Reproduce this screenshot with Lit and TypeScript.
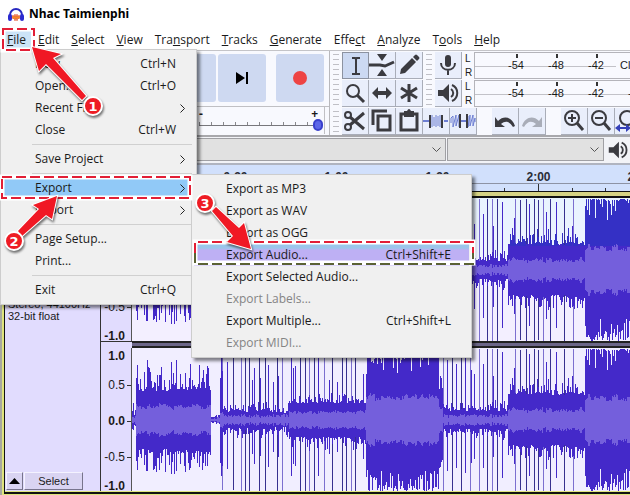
import { LitElement, html, svg, css, nothing } from "lit";
import { customElement, property } from "lit/decorators.js";
import { classMap } from "lit/directives/class-map.js";

type Entry = { label: string; keys?: string; sub?: boolean; off?: boolean; hot?: string } | null;

const FILE_MENU: Entry[] = [
  { label: "New", keys: "Ctrl+N" },
  { label: "Open...", keys: "Ctrl+O" },
  { label: "Recent Files", sub: true },
  { label: "Close", keys: "Ctrl+W" },
  null,
  { label: "Save Project", sub: true },
  null,
  { label: "Export", sub: true, hot: "blue" },
  { label: "Import", sub: true },
  null,
  { label: "Page Setup..." },
  { label: "Print..." },
  null,
  { label: "Exit", keys: "Ctrl+Q" },
];

const EXPORT_MENU: Entry[] = [
  { label: "Export as MP3" },
  { label: "Export as WAV" },
  { label: "Export as OGG" },
  { label: "Export Audio...", keys: "Ctrl+Shift+E", hot: "violet" },
  { label: "Export Selected Audio..." },
  { label: "Export Labels...", off: true },
  { label: "Export Multiple...", keys: "Ctrl+Shift+L" },
  { label: "Export MIDI...", off: true },
];

/* Menu titles: text before the access key, the key, text after it. */
const TITLES: [string, string, string][] = [
  ["", "F", "ile"], ["", "E", "dit"], ["", "S", "elect"], ["", "V", "iew"],
  ["Tra", "n", "sport"], ["", "T", "racks"], ["", "G", "enerate"], ["Effe", "c", "t"],
  ["", "A", "nalyze"], ["T", "o", "ols"], ["", "H", "elp"],
];

/* Sections of the recording: start, end, peak and rms levels, spikiness. */
const SECTIONS = [
  { from: 0, to: 4, peak: 9, rms: 5, jag: 8 },
  { from: 4, to: 79, peak: 33, rms: 13, jag: 24 },
  { from: 79, to: 88, peak: 5, rms: 3, jag: 3 },
  { from: 88, to: 91, peak: 46, rms: 8, jag: 20 },
  { from: 91, to: 157, peak: 11, rms: 5, jag: 9 },
  { from: 157, to: 234, peak: 20, rms: 8, jag: 12 },
  { from: 234, to: 307, peak: 58, rms: 21, jag: 14 },
  { from: 307, to: 311, peak: 32, rms: 12, jag: 20 },
  { from: 311, to: 376, peak: 12, rms: 5, jag: 9 },
  { from: 376, to: 453, peak: 28, rms: 10, jag: 14 },
  { from: 453, to: 2000, peak: 59, rms: 21, jag: 14 },
];
/* Drum hits: position and reach. */
const HITS: [number, number][] = [
  [15, 60], [25, 45], [39, 58], [44, 60], [58, 56], [67, 55], [71, 50], [75, 54],
  [89, 66], [90, 70], [95, 58], [101, 70], [109, 71], [113, 71], [117, 71], [120, 40], [122, 52],
  [127, 71], [128, 42], [133, 71], [136, 55], [141, 38], [145, 71], [146, 44], [150, 71],
  [159, 66], [161, 52], [163, 54], [168, 71], [173, 71], [177, 71], [182, 71], [186, 66], [192, 71],
  [197, 40], [200, 71], [205, 38], [210, 71], [214, 71], [219, 71], [223, 71], [231, 46],
  [311, 71], [315, 60], [320, 71], [324, 56], [329, 71], [333, 62], [338, 71], [339, 50], [342, 46],
  [347, 71], [351, 56], [355, 71], [360, 71], [361, 44], [365, 71], [370, 68],
  [380, 42], [382, 52], [383, 71], [388, 70], [394, 71], [397, 66], [402, 71], [406, 70], [411, 71],
  [414, 58], [418, 71], [424, 68], [432, 71], [440, 44], [441, 71],
];

function noise(n: number): number {
  const v = Math.sin(n * 12.9898 + 4.1414) * 43758.5453;
  return v - Math.floor(v);
}

@customElement("wave-lane")
export class WaveLane extends LitElement {
  @property({ type: Boolean }) tinted = false;

  static styles = css`
    :host { display: block; overflow: hidden; background: #f1eeff; }
    :host([tinted]) { background: linear-gradient(#e8f3ff 0, #eef3ff 72px, #f3efff 78px); }
    svg { display: block; width: 100%; height: 143px; }
    .peak { fill: #4429c9; }
    .cool { fill: #3430c5; }
    .hit { fill: #37308f; }
    .soft { fill: #7c6fd0; }
    .rms { fill: #745fdc; }
  `;

  render() {
    const mid = 72;
    let peak = "";
    let cool = "";
    let rms = "";
    for (let x = 0; x < 1500; x++) {
      const s = SECTIONS.find((p) => x >= p.from && x < p.to)!;
      const r = noise(Math.floor(x / 2));
      let up = s.peak + (noise(x) ** 3) * s.jag - r * 4;
      let down = s.peak + (noise(x + 900) ** 3) * s.jag - r * 4;
      if (s.peak > 50) {
        up = 71 - noise(x + 40) ** 4 * 26;
        down = 71 - noise(x + 70) ** 2 * 22;
      }
      const swell = s.rms + noise(Math.floor(x / 3) + 7) * s.rms * 0.3 - noise(x + 3) * 3;
      const a = Math.min(71, Math.round(up));
      const b = Math.min(71, Math.round(down));
      const q = Math.max(1, Math.round(swell));
      peak += `M${x} ${mid - a}h1v${a + b}h-1z`;
      if (a > 26) cool += `M${x} ${mid - a}h1v${a - 24}h-1z`;
      rms += `M${x} ${mid - q}h1v${q * 2}h-1z`;
    }
    return html`<svg shape-rendering="crispEdges" aria-hidden="true">
      ${HITS.map(([x, h], i) => {
        const low = h > 69 ? h : Math.round(h * 0.85);
        return svg`<rect class=${h > 69 ? (i % 3 ? "hit" : "soft") : "peak"} x=${x} y=${mid - h} width="1" height=${h + low}></rect>`;
      })}
      <path class="peak" d=${peak}></path>
      ${this.tinted ? svg`<path class="cool" d=${cool}></path>` : nothing}
      <path class="rms" d=${rms}></path>
    </svg>`;
  }
}

const glyphs: Record<string, unknown> = {
  beam: svg`<path d="M9 5h3l1 1 1-1h3M9 21h3l1-1 1 1h3M13 6v14" class="l2"></path>`,
  envelope: svg`<path d="M8 2h10l-5 7zM8 24h10l-5-7z"></path><path d="M0 13h11l5 1 9-4" class="l3"></path>`,
  pencil: svg`<path d="M4 22l1-5L16 6l4 4L9 21zM17 5l2-2q1-1 2 0l2 2q1 1 0 2l-2 2z"></path>`,
  zoom: svg`<circle cx="11" cy="11" r="6" class="l2"></circle><path d="M15 15l7 7" class="l3"></path>`,
  shift: svg`<path d="M3 13l6-6v4h8V7l6 6-6 6v-4H9v4z"></path>`,
  multi: svg`<path d="M13 4v18M5 8l16 10M21 8L5 18" class="l3"></path>`,
  cut: svg`<circle cx="6" cy="7" r="3" class="l2"></circle><circle cx="6" cy="19" r="3" class="l2"></circle><path d="M8 9l14 12M8 17L22 5" class="l3"></path>`,
  copy: svg`<path d="M9 8h12v14H9z" class="l3"></path><path d="M4 17V3h14" class="l3"></path>`,
  paste: svg`<path d="M5 6h16v16H5z" class="l3"></path><path d="M8 3h3q2-4 4 0h3v6H8z"></path>`,
  trim: svg`<path d="M0 13h6M21 13h4" class="l2 blue"></path><path d="M9 7v12M11 9v9M13 7v12M15 8v10M17 7v12" class="l1 blue"></path><path d="M7 7v13M19 7v13" class="l2"></path>`,
  silence: svg`<path d="M1 15v-5l2-2v11l3-12v11l3-11v12M18 8v11l2-12v11l3-11v11l2-8v4" class="l1 blue"></path><path d="M9 13h9" class="l2 blue"></path><path d="M10 6v14M17 6v14" class="l2"></path>`,
  undo: svg`<path d="M3 9v10h10l-4-3c5-4 9-2 12 3l2-1C20 9 12 7 6 13z"></path>`,
  redo: svg`<path class="dim" d="M23 9v10H13l4-3c-5-4-9-2-12 3l-2-1C6 9 14 7 20 13z"></path>`,
  zoomin: svg`<circle cx="11" cy="10" r="7" class="l2"></circle><path d="M16 15l6 7" class="l3"></path><path d="M7 10h8M11 6v8" class="l2"></path>`,
  zoomout: svg`<circle cx="11" cy="10" r="7" class="l2"></circle><path d="M16 15l6 7" class="l3"></path><path d="M7 10h8" class="l2"></path>`,
  zoomsel: svg`<circle cx="12" cy="10" r="7" class="l2"></circle><path d="M17 15l6 7" class="l3"></path><path class="navy" d="M0 20l5-4v3h6v-3l5 4-5 4v-3H5v3z"></path>`,
  mic: svg`<rect x="10" y="3" width="6" height="12" rx="3"></rect><path d="M6 11c0 9 14 9 14 0M13 18v5" class="l2"></path>`,
  speaker: svg`<path d="M3 10h5l6-6v18l-6-6H3z"></path><path d="M16 9c3 2 3 6 0 8M17 5c7 3 7 13 0 16" class="l2"></path>`,
  pause: svg`<path d="M8 7h3v12H8zM15 7h3v12h-3z"></path>`,
  play: svg`<path d="M8 6l12 7-12 7z"></path>`,
  stop: svg`<path d="M7 7h12v12H7z"></path>`,
  start: svg`<path d="M18 7v12l-8-6zM7 7h2v12H7z"></path>`,
  end: svg`<path class="ink" d="M7 7v12l9-6zM17 7h2v12h-2z"></path>`,
  record: svg`<circle class="rec" cx="13" cy="13" r="7"></circle>`,
};

@customElement("app-root")
export class AppRoot extends LitElement {
  static styles = css`
    :host {
      display: flex; flex-direction: column; position: relative; overflow: hidden;
      min-height: 100vh; background: #fff; color: #1a1a1a;
      font: 12px/22px "Open Sans", "Noto Sans", sans-serif;
    }
    * { box-sizing: border-box; }
    button, select, input { font: inherit; color: inherit; margin: 0; padding: 0; border: 0; background: none; border-radius: 0; }
    svg { display: block; flex: none; }
    .icon { width: 26px; height: 26px; fill: #3b3b40; }
    .l1, .l2, .l3 { fill: none; stroke: #3b3b40; stroke-width: 1; }
    .l2 { stroke-width: 2; }
    .l3 { stroke-width: 3; }
    .blue { stroke: #6d7ed2; }
    .navy { fill: #3440b8; }
    .dim { fill: #a9adb8; }
    .ink { fill: #000; }
    .rec { fill: #ee4444; }

    .title { display: flex; align-items: center; gap: 5px; height: 28px; padding-left: 8px; }
    .title h1 { margin: 0; font: bold 12px/28px "Noto Sans", sans-serif; color: #000; }
    .bar { display: flex; gap: 12px; height: 22px; padding-left: 7px; }
    .bar button { white-space: nowrap; line-height: 24px; }
    .bar .open { background: #cce4f7; margin: 0 -5px; padding: 0 5px; }

    .dock { display: flex; background: #f8f9fe; border-top: 1px solid #c4c4c8; border-bottom: 2px solid #a8a8ac; }
    .left { flex: none; width: 330px; border-right: 1px solid #b8b8bc; }
    .transport { display: flex; justify-content: flex-end; gap: 2px; padding: 3px 5px 4px 0; border-bottom: 1px solid #c0c0c4; }
    .transport button { flex: none; display: grid; place-items: center; width: 48px; height: 48px; border-radius: 3px; background: #ced9f1; }
    .transport .far { margin-left: 8px; }
    .speed { display: flex; flex-direction: column; width: 126px; margin-left: auto; margin-right: 4px; padding-top: 2px; height: 27px; border-right: 1px solid #c0c0c4; }
    .ends { display: flex; justify-content: space-between; padding: 0 6px 0 0; font-weight: bold; line-height: 10px; }
    .speed input { appearance: none; width: 124px; height: 12px;
      background: linear-gradient(#77777c, #77777c) 0 6px / 100% 1px no-repeat,
        repeating-linear-gradient(90deg, #88888c 0 1px, #0000 1px 12px) 0 3px / 100% 3px no-repeat; }
    .speed input::-webkit-slider-thumb { appearance: none; width: 10px; height: 12px; border-radius: 6px; background: #5d66e8; border: 2px solid #3a40cc; }

    .right { flex: 1; min-width: 0; overflow: hidden; }
    .upper, .lower { display: flex; }
    .lower { height: 27px; }
    .grip { flex: none; width: 12px; background: repeating-linear-gradient(#c0c0c6 0 1px, #0000 1px 5px) 3px 3px / 6px 90% no-repeat; }
    .tools { flex: none; display: grid; grid-template-columns: repeat(3, 27px); grid-auto-rows: 28px; padding-top: 1px; }
    .cell { flex: none; display: grid; place-items: center; width: 27px; height: 27px; background: #e9eefb; border-right: 1px solid #a9adb8; border-bottom: 1px solid #a9adb8; }
    .cell.on { background: #ccd9f2; border: 1px solid #8c92a0; }
    .space { flex: none; width: 15px; }
    .meters { flex: 1; min-width: 0; display: grid; grid-template-rows: 28px 28px; padding-top: 1px; }
    .meter { display: flex; min-width: 0; overflow: hidden; }
    .lr { flex: none; display: flex; flex-direction: column; width: 12px; padding-left: 3px; font: 10px/14px "Liberation Sans", sans-serif; }
    .db { flex: 1; min-width: 0; height: 27px; border: 1px solid #b4b4ba; border-right: 0; overflow: hidden; display: flex; padding-left: 21px;
      font: 11px/25px "Liberation Sans", sans-serif; background: linear-gradient(#c2c2c8, #c2c2c8) 0 13px / 100% 1px no-repeat; }
    .db span { flex: none; width: 40px; text-align: center; white-space: nowrap; background: linear-gradient(#333, #333) 20px 1px / 2px 4px no-repeat; }
    .db .note { width: 90px; background: #f8f9fe; text-align: left; padding-left: 4px; }

    .devices { display: flex; height: 28px; background: #f2f3f7; padding: 1px 0 2px; border-bottom: 2px solid #b0b4c0; align-items: flex-start; gap: 1px; }
    .devices select { flex: none; height: 23px; appearance: none; border: 1px solid #a0a0a4;
      background: #e1e1e1 url('data:image/svg+xml,<svg xmlns="http://www.w3.org/2000/svg" width="9" height="6"><path d="M0.5 0.5l4 4 4-4" fill="none" stroke="%23555"/></svg>') right 4px center no-repeat; }
    .host { width: 446px; }
    .output { width: 157px; }
    .devices svg { width: 24px; height: 24px; margin-left: 1px; }

    .ruler { display: grid; grid-template-rows: 18px 8px; background: #d1e0fc; overflow: hidden; }
    .times { display: flex; padding-left: 84px; font: bold 12px/24px "Liberation Sans", sans-serif; color: #2a2d38; }
    .times span { flex: none; width: 101px; text-align: center; }
    .ruler svg { width: 100%; height: 8px; border-top: 1px solid #8d93a4; }
    .ruler line { stroke: #333; stroke-width: 1; }

    .track { flex: 1; display: grid; grid-template-columns: 96px 1fr; align-content: start; margin-left: 2px;
      border-top: 2px solid #111; border-left: 1px solid #111; border-bottom: 2px solid #111; }
    .frame { flex: 1; display: flex; flex-direction: column; background: #dfe47d; padding-bottom: 1px; border-left: 2px solid #a8a8a0; }
    .glow { height: 5px; border-top: 1px solid #111; background: #d6d384; }
    .panel { display: flex; flex-direction: column; background: #e1dcfe; border-right: 1px solid #333; font: 11px/12px "Liberation Sans", sans-serif; }
    .about { margin: 100px 0 0 3px; white-space: nowrap; }
    .foot { display: flex; gap: 1px; margin-top: auto; padding: 0 0 1px 1px; }
    .foot button { height: 18px; background: #d9d4f2; border: 1px solid #f4f2ff; border-right-color: #77748c; border-bottom-color: #77748c; }
    .fold { display: grid; place-items: center; width: 17px; }
    .fold svg { width: 11px; height: 6px; fill: #000; }
    .pick { width: 59px; }
    .scale { padding-top: 2px; text-align: right; background: #e1dcfe; border-right: 1px solid #555;
      font: 12px/12px "Liberation Sans", sans-serif; height: 143px; }
    .scale span { display: block; padding-right: 6px; }
    .scale .mark { margin: 17px 0; background: linear-gradient(#333, #333) right 6px / 4px 1px no-repeat; }
    .scale .zero { margin: 24px 0; }
    .strong { font-weight: bold; }
    .body { display: grid; grid-template-columns: 31px 1fr; }
    .gap { height: 7px; background: #6c6688; border-top: 2px solid #222; border-bottom: 2px solid #222; }
    .gap.pale { background: #e1dcfe; border-top: 1px solid #333; border-bottom: 0; }

    .menu { position: absolute; margin: 0; padding: 3px 2px; background: #f0f0f0; border: 1px solid #cdcdcd; box-shadow: 3px 3px 3px #0000007a; }
    .file { left: 0; top: 49px; width: 197px; }
    .export { left: 191px; top: 174px; width: 281px; }
    .item { display: flex; width: 100%; height: 22px; padding: 0 18px 0 32px; text-align: left; white-space: nowrap; align-items: center; }
    .item span { flex: 1; }
    .item svg { width: 5px; height: 9px; margin-right: -9px; fill: none; stroke: #222; }
    .item.off { color: #848484; }
    .item.blue { background: linear-gradient(90deg, #91c9f7 187px, #0000 187px); }
    .item.violet { background: linear-gradient(#9cc6ea 4px, #beb0f4 6px); }
    .menu hr { margin: 3px 2px 3px 29px; height: 1px; border: 0; background: #d0d0d0; }

    .marks { position: absolute; left: 0; top: 0; width: 480px; height: 270px; pointer-events: none; }
    .under { fill: none; stroke: #fff; stroke-width: 5; }
    .dash { fill: none; stroke: #e21f36; stroke-width: 2; stroke-dasharray: 10 4; }
    .olive { stroke: #5b6234; }
    .arrow { fill: #f01824; stroke: #fff; stroke-width: 2; paint-order: stroke; }
    .badge { fill: #ee1c24; stroke: #fff; stroke-width: 2; }
    .num { fill: #fff; font: bold 13px "DejaVu Sans", sans-serif; text-anchor: middle; }
    .lift { filter: drop-shadow(1px 2px 1px #00000088); }
  `;

  private icon(name: string) {
    return html`<svg class="icon" viewBox="0 0 26 26" aria-hidden="true">${glyphs[name]}</svg>`;
  }

  private cell(name: string, on = false) {
    return html`<button class=${classMap({ cell: true, on })} aria-label=${name}>${this.icon(name)}</button>`;
  }

  private menu(kind: string, entries: Entry[]) {
    return html`<div class="menu ${kind}" role="menu" aria-label=${kind}>
      ${entries.map((e) => e
        ? html`<button role="menuitem" class="item ${e.off ? "off" : ""} ${e.hot ?? ""}" ?disabled=${e.off}>
            <span>${e.label}</span>${e.keys ?? nothing}
            ${e.sub ? html`<svg viewBox="0 0 5 9"><path d="M0.5 0.5l4 4-4 4"></path></svg>` : nothing}
          </button>`
        : html`<hr>`)}
    </div>`;
  }

  private meter(name: string, note: string) {
    return html`<div class="meter">${this.cell(name)}
      <div class="lr"><span>L</span><span>R</span></div>
      <div class="db"><span>-54</span><span>-48</span><span>-42</span>${note
        ? html`<span class="note">${note}</span>` : html`<span>-36</span>`}</div>
    </div>`;
  }

  private scale() {
    return html`<div class="scale">
      <span class="strong">1.0</span><span class="mark">0.5</span><span class="mark zero strong">0.0</span>
      <span class="mark">-0.5</span><span class="strong">-1.0</span>
    </div>`;
  }

  private ticks() {
    return Array.from({ length: 60 }, (_, i) => {
      const x = Math.round(134 + (i * 101) / 3) + 0.5;
      return svg`<line x1=${x} x2=${x} y1=${i % 3 ? 4 : 0} y2="8"></line>`;
    });
  }

  render() {
    return html`
      <header class="title">
        <svg width="16" height="16" viewBox="0 0 16 16" aria-hidden="true">
          <path d="M2 9a6 6 0 0 1 12 0" fill="none" stroke="#2828c0" stroke-width="2"></path>
          <rect x="0" y="8" width="4" height="7" rx="2" fill="#2b2bd0"></rect>
          <rect x="12" y="8" width="4" height="7" rx="2" fill="#2b2bd0"></rect>
          <path d="M4 11l1-2 1 2 1-3 1 3 1-3 1 3 1-2 1 2-1 2-1-1-1 3-1-3-1 3-1-3-1 1z" fill="#f58a1f" stroke="#e0442a" stroke-width=".5"></path>
        </svg>
        <h1>Nhac Taimienphi</h1>
      </header>
      <nav class="bar">
        ${TITLES.map(([a, k, b], i) => html`<button class=${i ? "" : "open"}>${a}<u>${k}</u>${b}</button>`)}
      </nav>
      <section class="dock">
        <div class="left">
          <div class="transport">
            ${["pause", "play", "stop", "start", "end", "record"].map((n) =>
              html`<button class=${n === "record" ? "far" : ""} aria-label=${n}>${this.icon(n)}</button>`)}
          </div>
          <label class="speed">
            <span class="ends"><span>-</span><span>+</span></span>
            <input type="range" min="0" max="100" value="100" aria-label="Volume">
          </label>
        </div>
        <div class="right">
          <div class="upper">
            <div class="grip"></div>
            <div class="tools">
              ${this.cell("beam", true)}${this.cell("envelope")}${this.cell("pencil")}
              ${this.cell("zoom")}${this.cell("shift")}${this.cell("multi")}
            </div>
            <div class="grip"></div>
            <div class="meters">${this.meter("mic", "Click to Start")}${this.meter("speaker", "")}</div>
          </div>
          <div class="lower">
            <div class="grip"></div>
            ${["cut", "copy", "paste", "trim", "silence"].map((n) => this.cell(n))}
            <div class="space"></div>${this.cell("undo")}${this.cell("redo")}
            <div class="space"></div>${["zoomin", "zoomout", "zoomsel"].map((n) => this.cell(n))}
          </div>
        </div>
      </section>
      <section class="devices">
        <select class="host" aria-label="Recording device"><option></option></select>
        <select class="output" aria-label="Playback device"><option></option></select>
        ${this.icon("speaker")}
      </section>
      <div class="ruler">
        <div class="times">${["0:00", "0:30", "1:00", "1:30", "2:00", "2:30", "3:00", "3:30"].map((t) => html`<span>${t}</span>`)}</div>
        <svg shape-rendering="crispEdges" aria-hidden="true">${this.ticks()}</svg>
      </div>
      <main class="frame">
        <div class="glow"></div>
        <div class="track">
          <div class="panel">
            <div class="about">Stereo, 44100Hz<br>32-bit float</div>
            <div class="foot">
              <button class="fold" aria-label="Collapse"><svg viewBox="0 0 11 6"><path d="M0 6l5.500-6L11 6z"></path></svg></button>
              <button class="pick">Select</button>
            </div>
          </div>
          <div class="body">
            ${this.scale()}<wave-lane tinted></wave-lane>
            <div class="gap pale"></div><div class="gap"></div>
            ${this.scale()}<wave-lane></wave-lane>
          </div>
        </div>
      </main>
      ${this.menu("file", FILE_MENU)}
      ${this.menu("export", EXPORT_MENU)}
      <svg class="marks" viewBox="0 0 480 270" aria-hidden="true">
        <path class="under" d="M3 29h31v21H3zM2 177h188v21H2zM195 242h278v21H195z"></path>
        <path class="dash" d="M3 29h31v21H3zM2 177h188v21H2zM195 253v-11h278v11"></path>
        <path class="dash olive" d="M195 253v11h278v-11"></path>
        <g class="lift">
          <path class="arrow" d="M32 47l29 7-8 4 33 38-4 4-36-36-7 7z"></path>
          <path class="arrow" d="M57 196l-5 23-6-4-24 21-4-5 21-22-6-4z"></path>
          <path class="arrow" d="M251 249l-24-7 6-6-21-25 4-4 23 21 5-5z"></path>
          <circle class="badge" cx="93" cy="106" r="9"></circle>
          <circle class="badge" cx="14" cy="241" r="9"></circle>
          <circle class="badge" cx="205" cy="203" r="9"></circle>
        </g>
        <text class="num" x="93" y="111">1</text>
        <text class="num" x="14" y="246">2</text>
        <text class="num" x="205" y="208">3</text>
      </svg>`;
  }
}
